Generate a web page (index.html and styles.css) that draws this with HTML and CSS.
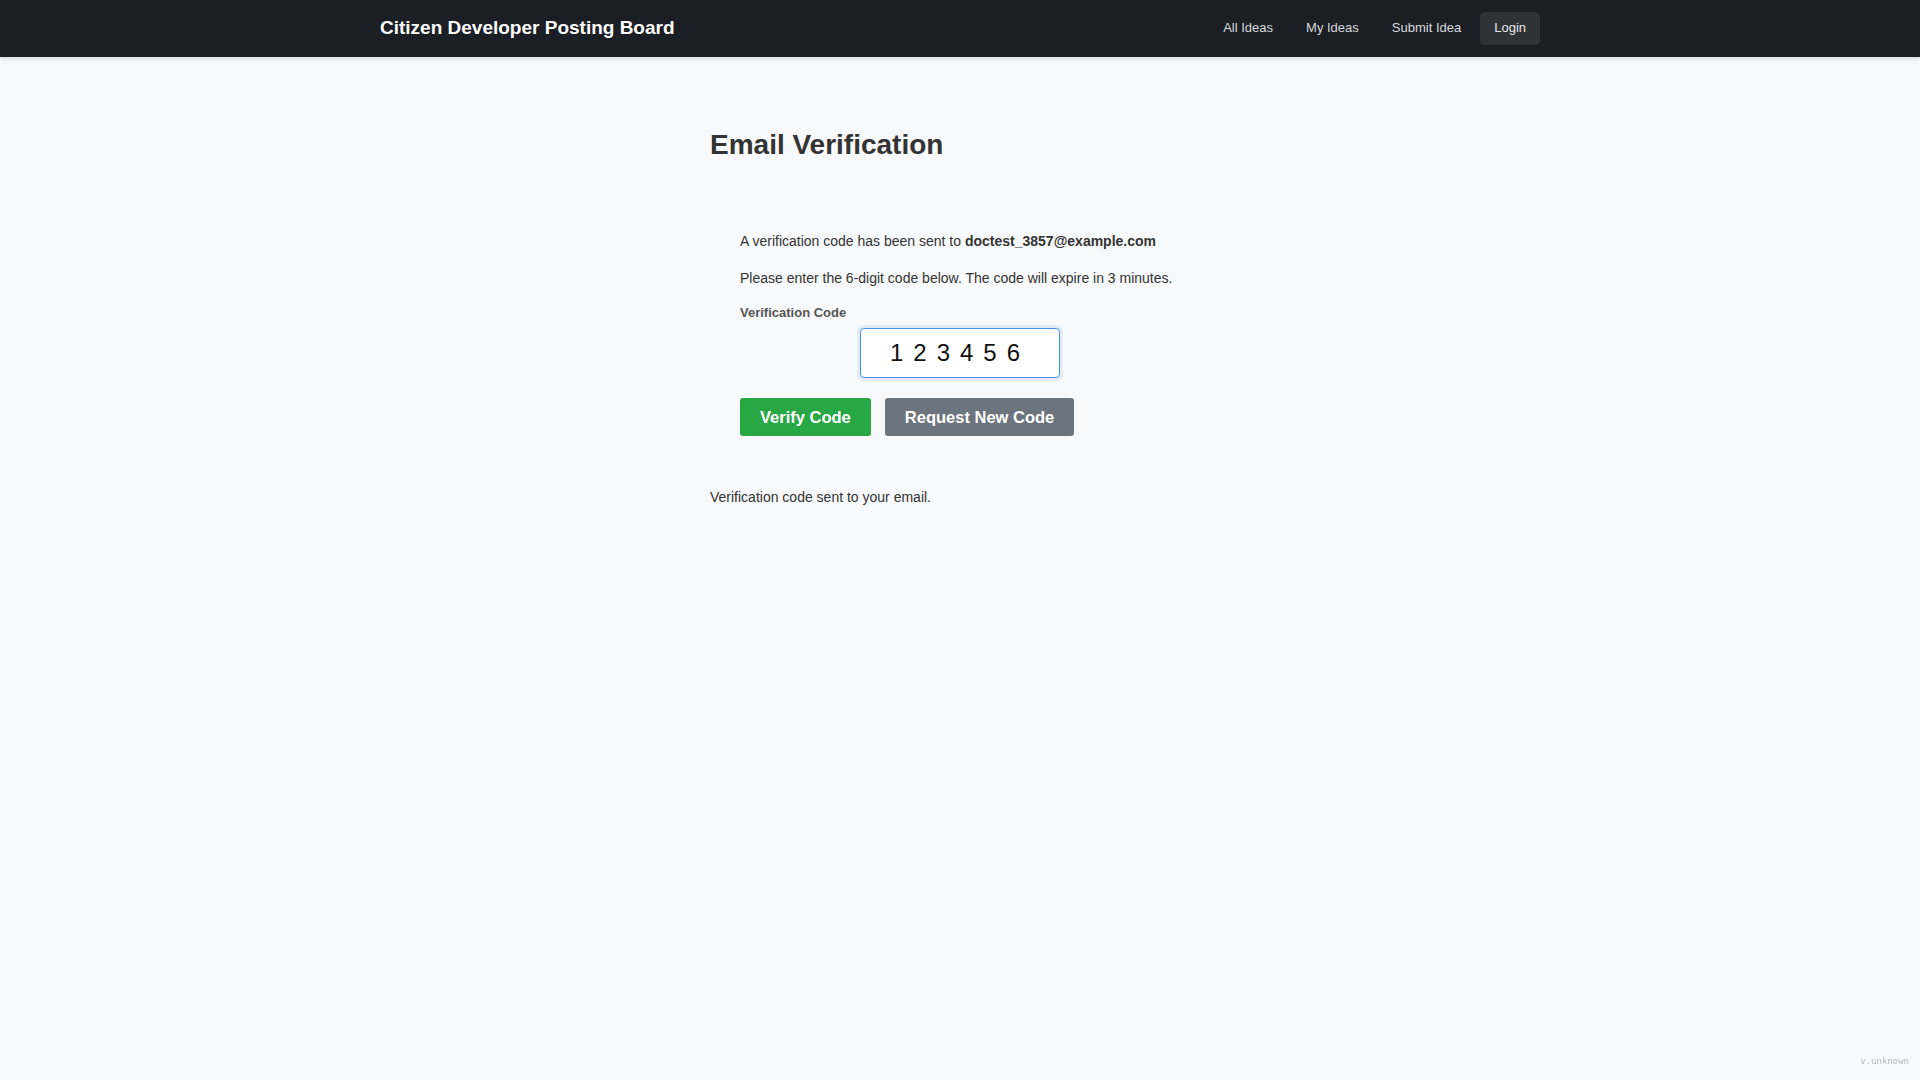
FILE: index.html
```html
<!DOCTYPE html>
<html lang="en">
<head>
<meta charset="utf-8">
<title>Email Verification - Citizen Developer Posting Board</title>
<link rel="stylesheet" href="styles.css">
</head>
<body>
<header class="site-header">
  <div class="header-inner">
    <a class="brand" href="#">Citizen Developer Posting Board</a>
    <nav class="nav">
      <a class="nav-link" href="#">All Ideas</a>
      <a class="nav-link" href="#">My Ideas</a>
      <a class="nav-link" href="#">Submit Idea</a>
      <a class="nav-link nav-login" href="#">Login</a>
    </nav>
  </div>
</header>
<main class="main">
  <h1 class="page-title">Email Verification</h1>
  <form class="verify-card">
    <p class="info">A verification code has been sent to <strong>doctest_3857@example.com</strong></p>
    <p class="info">Please enter the 6-digit code below. The code will expire in 3 minutes.</p>
    <label class="field-label" for="code">Verification Code</label>
    <input class="code-input" id="code" type="text" value="123456" maxlength="6">
    <div class="actions">
      <button type="button" class="btn btn-success">Verify Code</button>
      <button type="button" class="btn btn-secondary">Request New Code</button>
    </div>
  </form>
  <p class="flash">Verification code sent to your email.</p>
</main>
<div class="version">v.unknown</div>
</body>
</html>
```
FILE: styles.css
```css
* { box-sizing: border-box; }
html, body { margin: 0; padding: 0; }
body {
  background: #f8f9fa;
  font-family: "Liberation Sans", Arial, sans-serif;
  color: #333;
  min-height: 1080px;
}
.site-header {
  background: #1b1e25;
  height: 57px;
  box-shadow: 0 2px 4px rgba(0, 0, 0, 0.12);
}
.header-inner {
  max-width: 1200px;
  margin: 0 auto;
  height: 57px;
  padding: 0 20px;
  display: flex;
  align-items: center;
  justify-content: space-between;
}
.brand {
  color: #fff;
  font-size: 19px;
  line-height: 24px;
  font-weight: bold;
  text-decoration: none;
  margin-top: -2px;
}
.nav {
  display: flex;
  align-items: center;
  gap: 5px;
}
.nav-link {
  color: #d9dbde;
  font-size: 13px;
  line-height: 15px;
  padding: 8px 14px 10px;
  border-radius: 5px;
  text-decoration: none;
}
.nav-login {
  background: #2f3237;
  color: #e6e7e9;
}
.main {
  width: 500px;
  margin: 0 auto;
  padding-top: 71px;
}
.page-title {
  margin: 0 0 39px;
  font-size: 28px;
  line-height: 34px;
  font-weight: bold;
  color: #333;
}
.verify-card {
  padding: 30px;
  margin: 0;
}
.info {
  margin: 0 0 16px;
  font-size: 14px;
  line-height: 21px;
  color: #333;
}
.field-label {
  display: block;
  font-size: 13px;
  line-height: 16px;
  font-weight: bold;
  color: #555;
  margin-bottom: 7px;
}
.code-input {
  display: block;
  width: 200px;
  height: 50px;
  margin: 0 auto;
  padding: 0 10px;
  border: 1px solid #4a90e2;
  border-radius: 4px;
  background: #fff;
  box-shadow: 0 0 0 3px rgba(74, 144, 226, 0.12);
  font-family: "Liberation Sans", Arial, sans-serif;
  font-size: 24px;
  letter-spacing: 10px;
  text-align: center;
  color: #111;
  outline: none;
}
.actions {
  display: flex;
  gap: 14px;
  margin-top: 20px;
}
.btn {
  font-family: "Liberation Sans", Arial, sans-serif;
  font-size: 16.5px;
  line-height: 18px;
  font-weight: bold;
  color: #fff;
  border: none;
  border-radius: 3px;
  padding: 10px 20px;
  height: 38px;
  cursor: pointer;
}
.btn-success { background: #28a745; }
.btn-secondary { background: #6c757d; }
.flash {
  margin: 21px 0 0;
  font-size: 14px;
  line-height: 21px;
  color: #333;
}
.version {
  position: fixed;
  right: 11px;
  bottom: 13px;
  font-family: "DejaVu Sans Mono", monospace;
  font-size: 9px;
  line-height: 11px;
  color: #b5b8bc;
}
```
